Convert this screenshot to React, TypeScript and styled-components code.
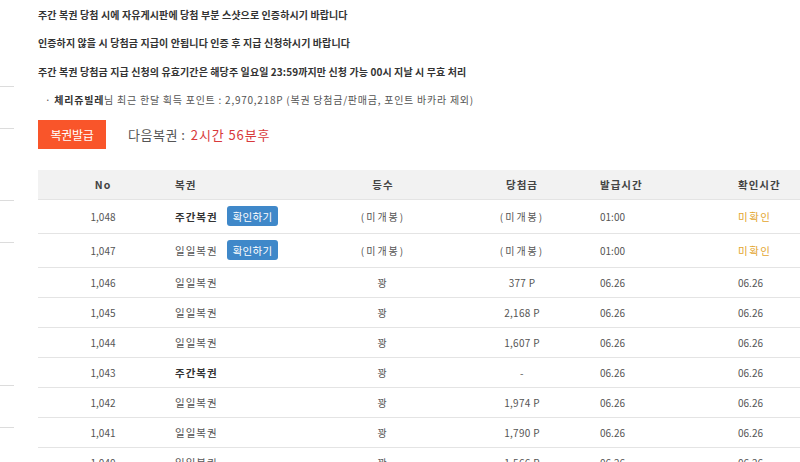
import React from 'react'
import styled, { createGlobalStyle } from 'styled-components'

const GlobalStyle = createGlobalStyle`
  html, body {
    margin: 0;
    padding: 0;
    background: #fff;
    overflow: hidden;
  }
  body {
    font-family: "Noto Sans CJK KR", "Noto Sans", sans-serif;
    color: #444;
  }
`

const Page = styled.div`
  display: flex;
  width: 800px;
  height: 462px;
  overflow: hidden;
`

const Sidebar = styled.aside`
  width: 14px;
  flex-shrink: 0;
  display: flex;
  flex-direction: column;
`

const SideItem = styled.div<{ $h: number }>`
  height: ${p => p.$h}px;
  border-bottom: 1px solid #dcdcdc;
  flex-shrink: 0;
`

const Content = styled.main`
  padding: 1px 0 0 24px;
  display: flex;
  flex-direction: column;
  flex-shrink: 0;
`

const Notice = styled.p`
  margin: 0;
  font-size: 10px;
  line-height: 28.3px;
  font-weight: 700;
  color: #333;
  letter-spacing: 0.1px;
  white-space: nowrap;
`

const PointLine = styled.p`
  margin: 0;
  padding-left: 7px;
  font-size: 10px;
  line-height: 28px;
  color: #555;
  letter-spacing: 0.75px;
  white-space: nowrap;
  strong {
    color: #333;
  }
`

const IssueRow = styled.div`
  display: flex;
  align-items: center;
  gap: 22px;
  margin-top: 6px;
`

const IssueButton = styled.button`
  width: 68px;
  height: 29px;
  border: none;
  padding: 0;
  background: #f9552a;
  color: #fff;
  font-family: inherit;
  font-size: 12px;
  letter-spacing: -0.3px;
`

const NextLabel = styled.span`
  font-size: 13px;
  color: #555;
  letter-spacing: 0.5px;
  em {
    font-style: normal;
    color: #d8393b;
    letter-spacing: 0.9px;
    margin-left: 2px;
  }
`

const Table = styled.div`
  margin-top: 21px;
  width: 800px;
  display: flex;
  flex-direction: column;
`

const cols = '130px 150px 130px 148px 138px 1fr'

const HeadRow = styled.div`
  display: grid;
  grid-template-columns: ${cols};
  height: 29px;
  align-items: center;
  background: #f2f2f2;
  border-bottom: 1px solid #e4e4e4;
`

const Row = styled.div<{ $tall?: boolean }>`
  display: grid;
  grid-template-columns: ${cols};
  height: ${p => (p.$tall ? 33 : 29)}px;
  align-items: center;
  border-bottom: 1px solid #e4e4e4;
`

const Cell = styled.div<{ $align?: 'center' | 'left'; $pad?: number }>`
  display: flex;
  align-items: center;
  justify-content: ${p => (p.$align === 'left' ? 'flex-start' : 'center')};
  padding-left: ${p => p.$pad ?? 0}px;
  font-size: 10px;
  color: #555;
  white-space: nowrap;
`

const HeadCell = styled(Cell)`
  font-weight: 700;
  font-size: 10.5px;
  color: #444;
  letter-spacing: 1px;
`

const Kind = styled.span<{ $bold?: boolean }>`
  font-weight: ${p => (p.$bold ? 700 : 400)};
  color: ${p => (p.$bold ? '#333' : '#555')};
  letter-spacing: 1px;
  font-size: 10.5px;
`

const Spaced = styled.span<{ $wide?: boolean }>`
  letter-spacing: ${p => (p.$wide ? 2 : 0.3)}px;
`

const CheckButton = styled.button`
  margin-left: 9px;
  height: 20px;
  padding: 0 6px;
  border: none;
  border-radius: 3px;
  background: #3f88c9;
  color: #fff;
  font-family: inherit;
  font-size: 10.5px;
  letter-spacing: 0.3px;
`

const Unchecked = styled.span`
  color: #e3a52e;
  letter-spacing: 1.5px;
  font-size: 10.5px;
`

type Ticket = {
  no: string
  kind: string
  weekly: boolean
  rank: string
  prize: string
  issued: string
  checked: string | null
  open?: boolean
}

const tickets: Ticket[] = [
  { no: '1,048', kind: '주간복권', weekly: true, rank: '(미개봉)', prize: '(미개봉)', issued: '01:00', checked: null, open: true },
  { no: '1,047', kind: '일일복권', weekly: false, rank: '(미개봉)', prize: '(미개봉)', issued: '01:00', checked: null, open: true },
  { no: '1,046', kind: '일일복권', weekly: false, rank: '꽝', prize: '377 P', issued: '06.26', checked: '06.26' },
  { no: '1,045', kind: '일일복권', weekly: false, rank: '꽝', prize: '2,168 P', issued: '06.26', checked: '06.26' },
  { no: '1,044', kind: '일일복권', weekly: false, rank: '꽝', prize: '1,607 P', issued: '06.26', checked: '06.26' },
  { no: '1,043', kind: '주간복권', weekly: true, rank: '꽝', prize: '-', issued: '06.26', checked: '06.26' },
  { no: '1,042', kind: '일일복권', weekly: false, rank: '꽝', prize: '1,974 P', issued: '06.26', checked: '06.26' },
  { no: '1,041', kind: '일일복권', weekly: false, rank: '꽝', prize: '1,790 P', issued: '06.26', checked: '06.26' },
  { no: '1,040', kind: '일일복권', weekly: false, rank: '꽝', prize: '1,566 P', issued: '06.26', checked: '06.26' },
]

const sideItems = [86, 41, 71, 41, 142, 41]

export default function App() {
  return (
    <>
      <GlobalStyle />
      <Page>
        <Sidebar>
          {sideItems.map((h, i) => (
            <SideItem key={i} $h={h} />
          ))}
        </Sidebar>
        <Content>
          <Notice>주간 복권 당첨 시에 자유게시판에 당첨 부분 스샷으로 인증하시기 바랍니다</Notice>
          <Notice>인증하지 않을 시 당첨금 지급이 안됩니다 인증 후 지급 신청하시기 바랍니다</Notice>
          <Notice>주간 복권 당첨금 지급 신청의 유효기간은 해당주 일요일 23:59까지만 신청 가능 00시 지날 시 무효 처리</Notice>
          <PointLine>
            · <strong>체리쥬빌레</strong>님 최근 한달 획득 포인트 : 2,970,218P (복권 당첨금/판매금, 포인트 바카라 제외)
          </PointLine>
          <IssueRow>
            <IssueButton>복권발급</IssueButton>
            <NextLabel>
              다음복권 : <em>2시간 56분후</em>
            </NextLabel>
          </IssueRow>
          <Table>
            <HeadRow>
              <HeadCell>No</HeadCell>
              <HeadCell $align="left" $pad={7}>복권</HeadCell>
              <HeadCell>등수</HeadCell>
              <HeadCell>당첨금</HeadCell>
              <HeadCell $align="left" $pad={4}>발급시간</HeadCell>
              <HeadCell $align="left" $pad={4}>확인시간</HeadCell>
            </HeadRow>
            {tickets.map(t => (
              <Row key={t.no} $tall={t.open}>
                <Cell>{t.no}</Cell>
                <Cell $align="left" $pad={7}>
                  <Kind $bold={t.weekly}>{t.kind}</Kind>
                  {t.open && <CheckButton>확인하기</CheckButton>}
                </Cell>
                <Cell>
                  <Spaced $wide>{t.rank}</Spaced>
                </Cell>
                <Cell>
                  <Spaced $wide={t.open}>{t.prize}</Spaced>
                </Cell>
                <Cell $align="left" $pad={4}>{t.issued}</Cell>
                <Cell $align="left" $pad={4}>
                  {t.checked ?? <Unchecked>미확인</Unchecked>}
                </Cell>
              </Row>
            ))}
          </Table>
        </Content>
      </Page>
    </>
  )
}
